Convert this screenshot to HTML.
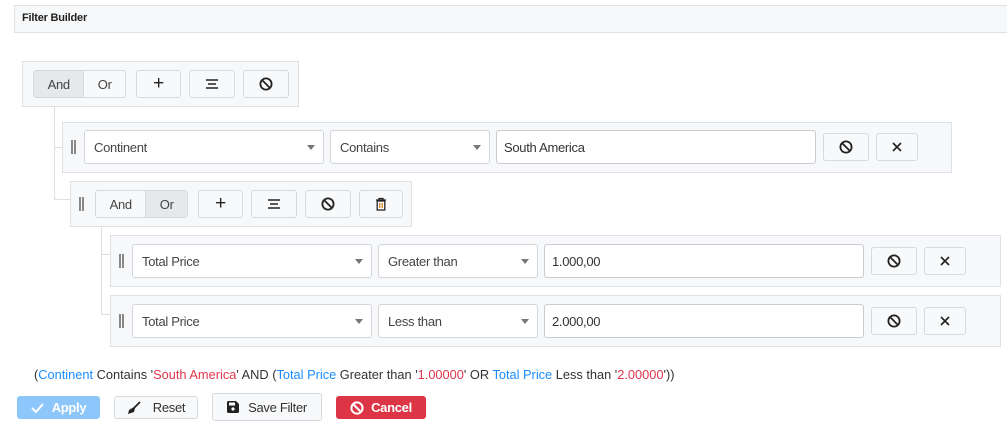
<!DOCTYPE html>
<html><head><meta charset="utf-8"><style>
*{box-sizing:border-box;margin:0;padding:0}
body{width:1007px;height:425px;background:#fff;font-family:"Liberation Sans",sans-serif;color:#333;position:relative;overflow:hidden;font-size:13px;letter-spacing:-0.3px}
.a{position:absolute}
.box{position:absolute;background:#f7f8f9;border:1px solid #dee1e5}
.btn{position:absolute;background:#f8f9fa;border:1px solid #d6d9dd;border-radius:3px;display:flex;align-items:center;justify-content:center;color:#222}
.sel{position:absolute;background:#fff;border:1px solid #d3d6da;border-radius:3px;padding-left:9px;display:flex;align-items:center;color:#444}
.sel .car{position:absolute;right:8px;top:50%;margin-top:-2px;border-left:4px solid transparent;border-right:4px solid transparent;border-top:5px solid #777}
.inp{position:absolute;background:#fff;border:1px solid #c9ccd0;border-radius:3px;padding-left:7px;display:flex;align-items:center;color:#333}
.ln{position:absolute;background:#dde0e3}
.hd{position:absolute;width:5px;height:14px;border-left:2px solid #888;border-right:2px solid #888}
.seg{position:absolute;display:flex;border:1px solid #d6d9dd;border-radius:3px;overflow:hidden;background:#f8f9fa}
.seg div{display:flex;align-items:center;justify-content:center;color:#444}
.seg .on{background:#e6e9ec}
.b{color:#1a8cff}.r{color:#e0354c}
</style></head><body>
<div class="box" style="left:14px;top:5px;width:1000px;height:28px;border-right:none"></div>
<div class="a" style="left:22px;top:12px;font-size:11px;font-weight:bold;color:#222;letter-spacing:-0.2px">Filter Builder</div>

<div class="ln" style="left:54px;top:97px;width:1px;height:103px"></div>
<div class="ln" style="left:54px;top:147px;width:8px;height:1px"></div>
<div class="ln" style="left:54px;top:199px;width:16px;height:1px"></div>
<div class="ln" style="left:101px;top:217px;width:1px;height:98px"></div>
<div class="ln" style="left:101px;top:254px;width:9px;height:1px"></div>
<div class="ln" style="left:101px;top:314px;width:9px;height:1px"></div>

<div class="box" style="left:22px;top:61px;width:277px;height:46px"></div>
<div class="seg" style="left:33px;top:70px;width:93px;height:28px"><div class="on" style="width:51px;border-right:1px solid #d6d9dd">And</div><div style="width:41px">Or</div></div>
<div class="btn" style="left:136px;top:70px;width:45px;height:28px;font-size:19px">+</div>
<div class="btn" style="left:189px;top:70px;width:46px;height:28px"><svg width="14" height="12"><path d="M1 2h12M3 6h8M1 10h12" stroke="#222" stroke-width="1.6"/></svg></div>
<div class="btn" style="left:243px;top:70px;width:46px;height:28px"><svg width="14" height="14"><circle cx="7" cy="7" r="5.6" fill="none" stroke="#222" stroke-width="1.8"/><path d="M3 3l8 8" stroke="#222" stroke-width="1.8"/></svg></div>

<div class="box" style="left:62px;top:122px;width:890px;height:51px"></div>
<div class="hd" style="left:71px;top:140px"></div>
<div class="sel" style="left:84px;top:130px;width:240px;height:34px">Continent<span class="car"></span></div>
<div class="sel" style="left:330px;top:130px;width:160px;height:34px">Contains<span class="car"></span></div>
<div class="inp" style="left:496px;top:130px;width:320px;height:34px">South America</div>
<div class="btn" style="left:823px;top:133px;width:46px;height:28px"><svg width="14" height="14"><circle cx="7" cy="7" r="5.6" fill="none" stroke="#222" stroke-width="1.8"/><path d="M3 3l8 8" stroke="#222" stroke-width="1.8"/></svg></div>
<div class="btn" style="left:876px;top:133px;width:42px;height:28px"><svg width="10" height="10"><path d="M1 1l8 8M9 1l-8 8" stroke="#222" stroke-width="1.6"/></svg></div>

<div class="box" style="left:70px;top:181px;width:342px;height:46px"></div>
<div class="hd" style="left:79px;top:197px"></div>
<div class="seg" style="left:95px;top:190px;width:93px;height:28px"><div style="width:51px;border-right:1px solid #d6d9dd">And</div><div class="on" style="width:41px">Or</div></div>
<div class="btn" style="left:198px;top:190px;width:45px;height:28px;font-size:19px">+</div>
<div class="btn" style="left:251px;top:190px;width:46px;height:28px"><svg width="14" height="12"><path d="M1 2h12M3 6h8M1 10h12" stroke="#222" stroke-width="1.6"/></svg></div>
<div class="btn" style="left:305px;top:190px;width:46px;height:28px"><svg width="14" height="14"><circle cx="7" cy="7" r="5.6" fill="none" stroke="#222" stroke-width="1.8"/><path d="M3 3l8 8" stroke="#222" stroke-width="1.8"/></svg></div>
<div class="btn" style="left:359px;top:190px;width:44px;height:28px"><svg width="12" height="14"><path d="M1 3h10M4 3V1.5h4V3" stroke="#222" stroke-width="1.3" fill="none"/><rect x="2.2" y="4" width="7.6" height="9" fill="#fff" stroke="#222" stroke-width="1.3"/><path d="M4.5 6v5M6 6v5M7.5 6v5" stroke="#d68a2a" stroke-width="0.9"/></svg></div>

<div class="box" style="left:110px;top:235px;width:891px;height:52px"></div>
<div class="hd" style="left:119px;top:254px"></div>
<div class="sel" style="left:132px;top:244px;width:240px;height:34px">Total Price<span class="car"></span></div>
<div class="sel" style="left:378px;top:244px;width:160px;height:34px">Greater than<span class="car"></span></div>
<div class="inp" style="left:544px;top:244px;width:320px;height:34px">1.000,00</div>
<div class="btn" style="left:871px;top:247px;width:46px;height:28px"><svg width="14" height="14"><circle cx="7" cy="7" r="5.6" fill="none" stroke="#222" stroke-width="1.8"/><path d="M3 3l8 8" stroke="#222" stroke-width="1.8"/></svg></div>
<div class="btn" style="left:924px;top:247px;width:42px;height:28px"><svg width="10" height="10"><path d="M1 1l8 8M9 1l-8 8" stroke="#222" stroke-width="1.6"/></svg></div>

<div class="box" style="left:110px;top:295px;width:891px;height:52px"></div>
<div class="hd" style="left:119px;top:314px"></div>
<div class="sel" style="left:132px;top:304px;width:240px;height:34px">Total Price<span class="car"></span></div>
<div class="sel" style="left:378px;top:304px;width:160px;height:34px">Less than<span class="car"></span></div>
<div class="inp" style="left:544px;top:304px;width:320px;height:34px">2.000,00</div>
<div class="btn" style="left:871px;top:307px;width:46px;height:28px"><svg width="14" height="14"><circle cx="7" cy="7" r="5.6" fill="none" stroke="#222" stroke-width="1.8"/><path d="M3 3l8 8" stroke="#222" stroke-width="1.8"/></svg></div>
<div class="btn" style="left:924px;top:307px;width:42px;height:28px"><svg width="10" height="10"><path d="M1 1l8 8M9 1l-8 8" stroke="#222" stroke-width="1.6"/></svg></div>

<div class="a" style="left:34px;top:367px;font-size:12.8px;letter-spacing:0;color:#333;white-space:nowrap">(<span class="b">Continent</span> Contains '<span class="r">South America</span>' AND (<span class="b">Total Price</span> Greater than '<span class="r">1.00000</span>' OR <span class="b">Total Price</span> Less than '<span class="r">2.00000</span>'))</div>

<div class="btn" style="left:17px;top:396px;width:83px;height:23px;background:#8cc6fb;border-color:#8cc6fb;color:#fff;font-weight:bold"><svg width="13" height="10" style="margin-right:8px"><path d="M1 5l4 4 7-8" stroke="#fff" stroke-width="2" fill="none"/></svg>Apply</div>
<div class="btn" style="left:114px;top:396px;width:84px;height:23px;color:#333"><svg width="14" height="13" style="margin-right:12px"><path d="M13 1L7 7" stroke="#222" stroke-width="1.8"/><path d="M7 6l-5 3-1 4 6-2 1-4z" fill="#222"/></svg>Reset</div>
<div class="btn" style="left:212px;top:393px;width:110px;height:28px;color:#333"><svg width="12" height="12" style="margin-right:9px"><path d="M0 1.5A1.5 1.5 0 0 1 1.5 0H9l3 3v7.5A1.5 1.5 0 0 1 10.5 12h-9A1.5 1.5 0 0 1 0 10.5z" fill="#222"/><rect x="2" y="1.5" width="6" height="3" fill="#fff"/><circle cx="6" cy="8" r="1.6" fill="#fff"/></svg>Save Filter</div>
<div class="btn" style="left:336px;top:396px;width:90px;height:23px;background:#dc3545;border-color:#dc3545;color:#fff;font-weight:bold"><svg width="14" height="14" style="margin-right:7px"><circle cx="7" cy="7" r="5.6" fill="none" stroke="#fff" stroke-width="2"/><path d="M3 3l8 8" stroke="#fff" stroke-width="2"/></svg>Cancel</div>
</body></html>
